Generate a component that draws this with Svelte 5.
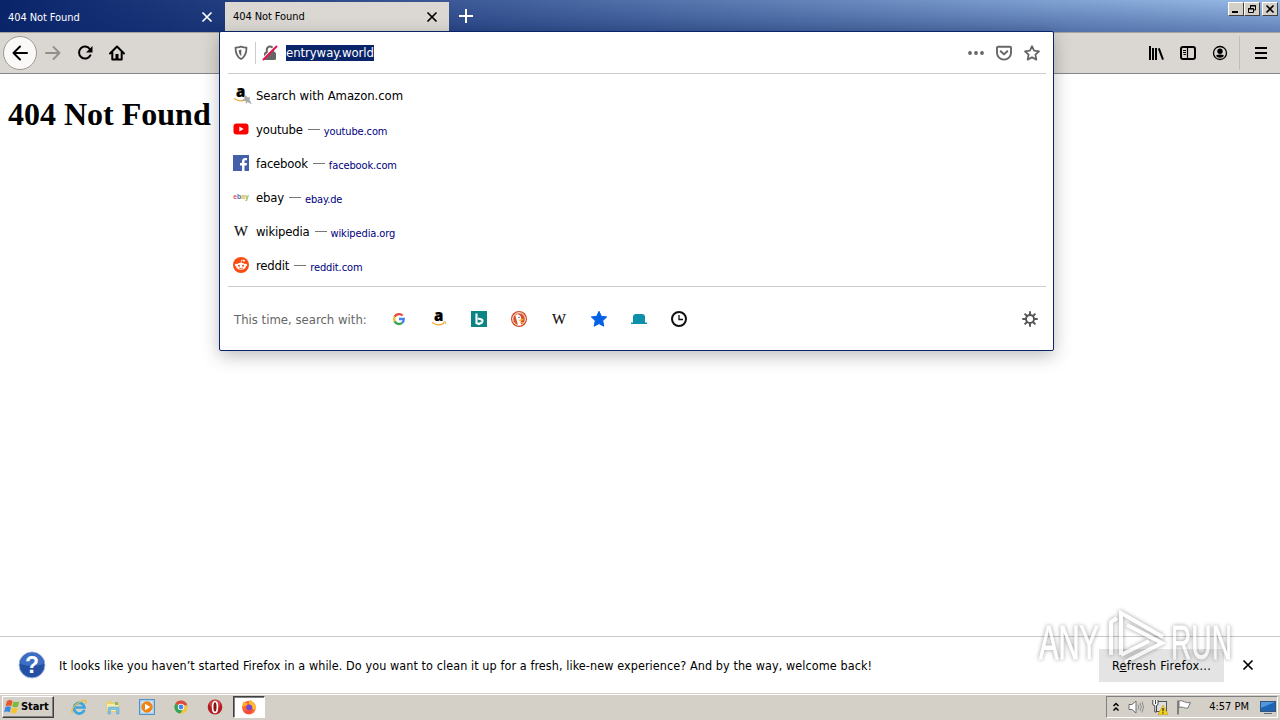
<script lang="ts">
  interface Suggestion {
    icon: string
    title: string
    url: string
  }

  const tabs = [
    { title: '404 Not Found', active: false },
    { title: '404 Not Found', active: true },
  ]

  const suggestions: Suggestion[] = [
    { icon: 'youtube', title: 'youtube', url: 'youtube.com' },
    { icon: 'facebook', title: 'facebook', url: 'facebook.com' },
    { icon: 'ebay', title: 'ebay', url: 'ebay.de' },
    { icon: 'wikipedia', title: 'wikipedia', url: 'wikipedia.org' },
    { icon: 'reddit', title: 'reddit', url: 'reddit.com' },
  ]

  const engines = ['google', 'amazon', 'bing', 'duck', 'wikipedia', 'bookmark', 'hat', 'history']
  const pinned = ['ie', 'explorer', 'player', 'chrome', 'opera']
</script>

{#snippet icon(name: string)}
  <svg class="icon" viewBox="0 0 16 16" width="16" height="16">
    {#if name === 'close'}
      <path d="M3.500 3.500l9 9M12.500 3.500l-9 9" fill="none" stroke="currentColor" stroke-width="1.700" />
    {:else if name === 'plus'}
      <path d="M8 1v14M1 8h14" fill="none" stroke="currentColor" stroke-width="2" />
    {:else if name === 'back'}
      <path d="M15 8H1.500M8 1.500L1.500 8 8 14.500" fill="none" stroke="currentColor" stroke-width="2" stroke-linecap="round" stroke-linejoin="round" />
    {:else if name === 'forward'}
      <path d="M1 8h13.500M8.500 2l6 6-6 6" fill="none" stroke="currentColor" stroke-width="1.800" stroke-linecap="round" stroke-linejoin="round" />
    {:else if name === 'reload'}
      <path d="M13.400 10.300A6 6 0 1 1 13 4.200" fill="none" stroke="currentColor" stroke-width="2" stroke-linecap="round" />
      <path d="M15.500 1v6.500H9z" fill="currentColor" />
    {:else if name === 'home'}
      <path d="M1 8.500L8 1.500l7 7M3.300 7.500V14.500h9.400V7.500" fill="none" stroke="currentColor" stroke-width="2" stroke-linecap="round" stroke-linejoin="round" />
      <path d="M6.500 14.500V9h3v5.500" fill="currentColor" />
    {:else if name === 'shield'}
      <path d="M8 1.700c2 .6 3.700.9 5.500 1 0 5.200-1 8.900-5.500 11.300-4.500-2.400-5.500-6.100-5.500-11.300 1.800-.1 3.500-.4 5.500-1z" fill="none" stroke="currentColor" stroke-width="1.800" stroke-linejoin="round" />
      <path d="M8.300 4.500v6.500c-1.800-1.300-2.500-3.200-2.600-5.800z" fill="currentColor" />
    {:else if name === 'insecure'}
      <rect x="2" y="7" width="12" height="8" rx="1.500" fill="currentColor" />
      <path d="M4.800 7V4.600a3.200 3.200 0 0 1 6.400 0V7" fill="none" stroke="currentColor" stroke-width="2" />
      <path d="M1.500 13.300L13.500 1.300" stroke="#fff" stroke-width="2.200" />
      <path d="M1.500 14.500L14.500 1.500" stroke="#e3154f" stroke-width="2" stroke-linecap="round" />
    {:else if name === 'dots'}
      <g fill="currentColor"><circle cx="2" cy="8" r="1.900" /><circle cx="8" cy="8" r="1.900" /><circle cx="14" cy="8" r="1.900" /></g>
    {:else if name === 'pocket'}
      <path d="M2 1.800h12q1 0 1 1v5a7 6.800 0 0 1-14 0v-5q0-1 1-1z" fill="none" stroke="currentColor" stroke-width="1.900" />
      <path d="M4.700 6.200L8 9.400l3.300-3.200" fill="none" stroke="currentColor" stroke-width="2" stroke-linecap="round" stroke-linejoin="round" />
    {:else if name === 'star'}
      <path d="M8 1.200l2.100 4.500 4.900.6-3.600 3.400.9 4.900L8 12.200l-4.300 2.400.9-4.900L1 6.300l4.900-.6z" fill="none" stroke="currentColor" stroke-width="1.800" stroke-linejoin="round" />
    {:else if name === 'library'}
      <path d="M2 1v14M5 3v12M8 3v12M10.800 3.300L15 14.600" fill="none" stroke="currentColor" stroke-width="2" />
    {:else if name === 'sidebar'}
      <rect x="1" y="2" width="14" height="12" rx="2" fill="none" stroke="currentColor" stroke-width="2" />
      <path d="M7.500 2v12" stroke="currentColor" stroke-width="1.200" />
      <path d="M3 5.500h3M3 7.500h3M3.500 9.500H6" stroke="currentColor" />
    {:else if name === 'account'}
      <circle cx="8" cy="8" r="6.500" fill="none" stroke="currentColor" stroke-width="1.300" />
      <circle cx="8" cy="6.200" r="2.700" fill="currentColor" />
      <path d="M3.900 10.800Q5 9.500 8 9.500t4.100 1.300Q11 12.800 8 12.800t-4.100-2z" fill="currentColor" />
    {:else if name === 'menu'}
      <path d="M2 3h12M2 8h12M2 13h12" stroke="currentColor" stroke-width="2" />
    {:else if name === 'gear'}
      <circle cx="8" cy="8" r="4" fill="none" stroke="currentColor" stroke-width="1.900" />
      <path d="M8 .3v3.500M8 12.200v3.500M.3 8h3.500M12.200 8h3.500M2.600 2.600L5 5M11 11l2.400 2.400M2.600 13.400L5 11M11 5l2.400-2.400" stroke="currentColor" stroke-width="1.900" />
    {:else if name === 'amazon'}
      <text x="3" y="10" font-family="Open Sans" font-size="15" font-weight="800" stroke="#000" stroke-width=".2">a</text>
      <path d="M1 11.500q6.500 4.300 12 .8" fill="none" stroke="#f2a72c" stroke-width="1.300" />
      <path d="M12 11l2.500-.1-.5 2.300" fill="none" stroke="#f2a72c" />
    {:else if name === 'youtube'}
      <rect x=".5" y="2.500" width="15" height="11" rx="3" fill="#f00" />
      <path d="M6.300 5.500v5l4.400-2.500z" fill="#fff" />
    {:else if name === 'facebook'}
      <rect width="16" height="16" fill="#4460a8" />
      <path d="M9 16v-5.500H7V8h2V6.300C9 4.200 10.200 3 12.300 3H14v2.300h-1.300c-1 0-1.200.5-1.200 1.200V8H14l-.4 2.500h-2.100V16z" fill="#fff" />
    {:else if name === 'ebay'}
      <text x=".2" y="9.900" font-family="Liberation Sans" font-size="8" font-weight="bold" textLength="15.500" lengthAdjust="spacingAndGlyphs"><tspan fill="#d8575b">e</tspan><tspan fill="#4a6dc2">b</tspan><tspan fill="#e3b43f">a</tspan><tspan fill="#8cb83d">y</tspan></text>
    {:else if name === 'wikipedia'}
      <text x="1" y="12.700" font-family="Liberation Serif" font-size="15" textLength="14" lengthAdjust="spacingAndGlyphs" fill="#111" stroke="#111" stroke-width=".15">W</text>
    {:else if name === 'reddit'}
      <circle cx="8" cy="8" r="8" fill="#fa4b12" />
      <ellipse cx="8" cy="9.300" rx="4.900" ry="3.500" fill="#fff" />
      <circle cx="3.200" cy="8" r="1.300" fill="#fff" /><circle cx="12.800" cy="8" r="1.300" fill="#fff" />
      <circle cx="11" cy="3.700" r="1" fill="#fff" />
      <path d="M8 6l.7-3 2.300.7" fill="none" stroke="#fff" stroke-width=".7" />
      <circle cx="6" cy="8.700" r="1" fill="#fa4b12" /><circle cx="10" cy="8.700" r="1" fill="#fa4b12" />
      <path d="M6 11q2 1.200 4 0" fill="none" stroke="#fa4b12" stroke-width=".8" />
    {:else if name === 'google'}
      <g fill="none" stroke-width="2.300">
        <path d="M11.600 4.500A5 5 0 0 0 3.600 5.800" stroke="#e24a3b" />
        <path d="M3.600 5.800a5 5 0 0 0 0 4.600" stroke="#f4b92b" />
        <path d="M3.600 10.400a5 5 0 0 0 7.500 1.500" stroke="#35a556" />
        <path d="M11.100 11.900A5 5 0 0 0 12.800 8H8" stroke="#4382ee" />
      </g>
    {:else if name === 'bing'}
      <rect width="16" height="16" fill="#0c8484" />
      <path d="M5.500 2.500v9.500l2.500 1 3-1.500q1.200-2-.5-3L7 7.500" fill="none" stroke="#fff" stroke-width="2.100" />
    {:else if name === 'duck'}
      <circle cx="8" cy="8" r="8" fill="#cf4a24" />
      <circle cx="8" cy="8" r="6.300" fill="#d95127" stroke="#fff" stroke-width="1" />
      <path d="M4.300 4.500Q7 2 9.500 5q1.500 2 .2 5l.3 4H7z" fill="#fff" />
      <path d="M8 8.700q2-1.300 5-.5-2 2-5 1.800z" fill="#f9b92c" />
      <circle cx="8" cy="6.400" r=".7" fill="#253c61" />
      <path d="M9 11.500l3-.8v2.500z" fill="#e9a83a" />
    {:else if name === 'bookmark'}
      <path d="M8 .3l2.300 5 5.400.6-4 3.800 1.100 5.500L8 12.600l-4.800 2.600 1.100-5.500-4-3.800 5.400-.6z" fill="#0560e8" stroke="#0560e8" stroke-linejoin="round" />
    {:else if name === 'hat'}
      <path d="M2 11.500V5.500Q2.200 3 4.500 3h7q2.300 0 2.500 2.500v6h2V13H0v-1.500z" fill="#0d91aa" />
    {:else if name === 'history'}
      <circle cx="8" cy="8" r="7" fill="none" stroke="#111" stroke-width="2" />
      <path d="M8 4v4.500h4" fill="none" stroke="#111" stroke-width="1.300" />
    {:else if name === 'ie'}
      <path d="M13.300 10.800A5.300 5.300 0 1 1 13.500 8.500H4" fill="none" stroke="#3aa5df" stroke-width="2.700" />
      <path d="M1.500 14.300Q-1 11.500 5 5.800 12 0 14.800 1.300q1 1-.8 3.500" fill="none" stroke="#e9bd3d" stroke-width="1.200" />
    {:else if name === 'explorer'}
      <path d="M1 3q0-1 1-1h4l1 1.500h7V13H1z" fill="#e9cf75" />
      <path d="M2 5h11v7H2z" fill="#f8edae" />
      <path d="M3 15V9.500q0-1.500 1.500-1.500h8Q14 8 14 9.500V15h-2.500v-4.500h-6V15z" fill="#7fc3e8" stroke="#55a3cd" stroke-width=".5" />
      <path d="M10 3h3v3h-3z" fill="#83bd58" />
    {:else if name === 'player'}
      <rect x=".5" y=".5" width="15" height="15" fill="#a6d0f0" stroke="#5790c4" />
      <rect x="2.500" y="2.500" width="11" height="11" fill="#dceefb" />
      <circle cx="8" cy="8" r="5.700" fill="#f08414" />
      <path d="M6 4.700v6.600L11.300 8z" fill="#fff" />
    {:else if name === 'chrome'}
      <circle cx="8" cy="8" r="6.600" fill="#f3c63a" />
      <path d="M8 8L2.300 4.700a6.600 6.600 0 0 1 12 1.500H8z" fill="#dc4b3e" />
      <path d="M8 8L2.300 4.700a6.600 6.600 0 0 0 5 9.900l3-4.600z" fill="#35a35a" />
      <circle cx="8" cy="8" r="3.200" fill="#fff" /><circle cx="8" cy="8" r="2.400" fill="#4687e4" />
    {:else if name === 'opera'}
      <ellipse cx="8" cy="8" rx="7.300" ry="7.600" fill="#b51d20" />
      <ellipse cx="8" cy="5" rx="5.500" ry="4" fill="#cb4743" />
      <ellipse cx="8" cy="8" rx="2.400" ry="5.500" fill="#8d1114" stroke="#fff" stroke-width="1.700" />
    {:else if name === 'firefox'}
      <circle cx="8" cy="8.600" r="6.900" fill="#ff6a2b" />
      <path d="M8 5Q7 2.800 10 .500q.5 2 3 3.700 2.300 2 1.900 5.300Q12 12.500 11 8z" fill="#ffbe32" />
      <path d="M1.300 7.500Q1 4 3 2q0 1.500 1 2 2 .1 3 1L4.500 7z" fill="#ffb02e" />
      <circle cx="8.200" cy="8.500" r="3" fill="#7548cf" />
      <path d="M2 10.500q5 3 9.500 0Q10.500 15 7 15 3.500 14.500 2 10.500z" fill="#f9483f" />
    {:else if name === 'sound'}
      <path d="M1 5.500h3L8 2v12l-4-3.500H1z" fill="#fff" stroke="#6e6e6e" />
      <path d="M10 5.500q1.500 2.500 0 5M12 4q2.500 4 0 8M14 2.500q3 5.500 0 11" fill="none" stroke="#848484" stroke-width=".9" />
    {:else if name === 'network'}
      <rect x="4.500" y="2.500" width="10" height="10" fill="#dedede" stroke="#555" />
      <path d="M.8 1v4q0 1.500 2 1.500V13h1.700V6.500Q6 6.300 6 5V1M3.500 1v4" fill="#fff" stroke="#444" />
      <path d="M11 6l5 9.500H6z" fill="#f6d21d" stroke="#c89b10" stroke-width=".6" />
      <path d="M11 9v3.300M11 13.300v1.200" stroke="#222" stroke-width="1.200" />
    {:else if name === 'flag'}
      <path d="M2 1.500v14" stroke="#666" stroke-width="1.500" />
      <path d="M3 2q3-1 5.500.8 3 1.500 6 .7-1.500 3-2.500 5.500-3 .5-4.500-.5-2.500-1-4.500 0z" fill="#fff" stroke="#777" />
    {:else if name === 'desktop'}
      <rect x=".5" y="2.500" width="15" height="10" fill="#1e64b4" stroke="#3a5479" />
      <path d="M1 3h14L1 9z" fill="#4d98df" />
      <path d="M4 14.500h8" stroke="#5a6d85" />
    {/if}
  </svg>
{/snippet}

<div class="screen">
  <header class="titlebar">
    {#each tabs as tab}
      <div class="tab" class:active={tab.active}>
        <span>{tab.title}</span>
        {@render icon('close')}
      </div>
    {/each}
    <button class="new-tab" aria-label="New tab">{@render icon('plus')}</button>
    <div class="window-controls">
      <span class="control"><svg viewBox="0 0 12 10"><path d="M2 8h6" stroke="#000" stroke-width="2" /></svg></span>
      <span class="control"><svg viewBox="0 0 12 10"><path d="M4.500 4V1.500h5V6H8M4 2h6" fill="none" stroke="#000" /><path d="M2.500 4.500h5v4h-5zM2 5h6" fill="none" stroke="#000" /></svg></span>
      <span class="control last"><svg viewBox="0 0 12 10"><path d="M2.500 1.500l7 7M9.500 1.500l-7 7" stroke="#000" stroke-width="1.600" /></svg></span>
    </div>
  </header>

  <nav class="toolbar">
    <span class="back">{@render icon('back')}</span>
    <span class="disabled">{@render icon('forward')}</span>
    {@render icon('reload')}
    {@render icon('home')}
    <div class="tools">
      {@render icon('library')}
      {@render icon('sidebar')}
      {@render icon('account')}
      <span class="menu">{@render icon('menu')}</span>
    </div>
  </nav>

  <main>
    <h1>404 Not Found</h1>
  </main>

  <section class="urlbar">
    <div class="input-row">
      {@render icon('shield')}
      <span class="identity">{@render icon('insecure')}</span>
      <span class="address">entryway.world</span>
      <span class="page-actions">
        {@render icon('dots')}
        {@render icon('pocket')}
        {@render icon('star')}
      </span>
    </div>
    <div class="results">
      <div class="row">
        <span class="pinned-icon">
          {@render icon('amazon')}
          <svg class="pin" viewBox="0 0 10 10"><path d="M4 .5l1.500 2L8 2 7.500 4.500 10 9.500 5.500 7 4 9 3.500 6 0 5.500l2.500-2L2 1z" fill="#aaa" /></svg>
        </span>
        <span class="title wide">Search with Amazon.com</span>
      </div>
      {#each suggestions as item}
        <div class="row">
          {@render icon(item.icon)}
          <span class="title">{item.title}</span>
          <span class="dash"></span>
          <span class="url">{item.url}</span>
        </div>
      {/each}
    </div>
    <footer class="one-offs">
      <span class="label">This time, search with:</span>
      {#each engines as engine}
        {@render icon(engine)}
      {/each}
      <span class="settings">{@render icon('gear')}</span>
    </footer>
  </section>

  <aside class="notification">
    <svg class="help" viewBox="0 0 28 28">
      <circle cx="14" cy="14" r="13" fill="#2450a4" stroke="#a5b8dc" />
      <path d="M2.500 13a11.500 11.500 0 0 1 23 0q-11 4-23 0z" fill="#3c6fc3" />
      <text x="14" y="22" text-anchor="middle" font-family="Liberation Sans" font-size="23" font-weight="700" fill="#fff">?</text>
    </svg>
    <p>It looks like you haven’t started Firefox in a while. Do you want to clean it up for a fresh, like-new experience? And by the way, welcome back!</p>
    <button class="refresh"><span>R<u>e</u>fresh Firefox...</span></button>
    {@render icon('close')}
  </aside>

  <footer class="taskbar">
    <button class="start">
      <svg viewBox="0 0 16 16">
        <path d="M3 2q3-1.800 5.500 0L7.300 7.200Q4.500 5.600 1.500 7.300z" fill="#e8572c" />
        <path d="M9.300 2.400q3 1.400 6-.2l-1.300 5.300q-3 1.500-5.700-.1z" fill="#7cba3d" />
        <path d="M1.300 8.200q3-1.700 5.700 0l-1.300 5.200q-3-1.600-5.500.1z" fill="#3c8ade" />
        <path d="M8 8.500q3 1.500 5.700.1L12.500 13.700q-3 1.500-5.800-.1z" fill="#f5c52d" />
      </svg>
      Start
    </button>
    <div class="pinned">
      {#each pinned as app}
        {@render icon(app)}
      {/each}
    </div>
    <span class="task">{@render icon('firefox')}</span>
    <div class="tray">
      <svg class="chevrons" viewBox="0 0 8 10"><path d="M1.500 4L4 1.500 6.500 4M1.500 8.500L4 6l2.500 2.500" fill="none" stroke="#000" stroke-width="1.500" /></svg>
      {@render icon('sound')}
      {@render icon('network')}
      {@render icon('flag')}
      <time>4:57 PM</time>
      {@render icon('desktop')}
    </div>
  </footer>

  <svg class="watermark" viewBox="0 0 200 84">
    <g class="mark">
      <text x="4" y="54" textLength="60" lengthAdjust="spacingAndGlyphs">ANY</text>
      <text x="136" y="54" textLength="61" lengthAdjust="spacingAndGlyphs">RUN</text>
      <path d="M76 50V17l6-4M86 50V8l42 24M92 20l35 18-37 19M86 50l28-14" />
    </g>
  </svg>
</div>

<style>
  :global(body) {
    margin: 0;
  }

  .screen {
    position: relative;
    display: flex;
    flex-direction: column;
    width: 1280px;
    height: 720px;
    overflow: hidden;
    background: #fff;
    color: #000;
    font-family: 'DejaVu Sans Condensed', 'DejaVu Sans', sans-serif;
    font-stretch: condensed;
    font-size: 11px;
  }

  .icon {
    display: block;
    flex: none;
    overflow: visible;
    font-stretch: normal;
    letter-spacing: 0;
  }

  button {
    border: 0;
    padding: 0;
    color: inherit;
    font: inherit;
  }

  .titlebar {
    display: flex;
    box-sizing: border-box;
    height: 32px;
    padding-top: 2px;
    background:
      linear-gradient(rgba(10, 36, 106, 0.05), rgba(10, 36, 106, 0.42)),
      linear-gradient(90deg, #0a246a, #a0c4ee);
  }

  .tab {
    display: flex;
    align-items: center;
    justify-content: space-between;
    box-sizing: border-box;
    width: 225px;
    height: 30px;
    padding: 0 10px 0 8px;
    color: #fff;
    letter-spacing: -0.08px;
  }

  .tab.active {
    width: 224px;
    height: 29px;
    padding-right: 9px;
    background: #dbd7d2;
    color: #000;
  }

  .new-tab {
    align-self: center;
    margin: -3px 0 0 9px;
    background: none;
    color: #fff;
  }

  .window-controls {
    display: flex;
    margin: 0 2px 0 auto;
  }

  .control {
    box-sizing: border-box;
    width: 16px;
    height: 14px;
    border: 1px solid;
    border-color: #fff #404040 #404040 #fff;
    background: #d4d0c8;
  }

  .control svg {
    display: block;
    width: 12px;
    height: 10px;
    margin: 1px;
  }

  .control.last {
    margin-left: 2px;
  }

  .toolbar {
    display: flex;
    align-items: center;
    box-sizing: border-box;
    height: 42px;
    padding-left: 3px;
    gap: 16px;
    border-top: 1px solid #a9a39b;
    border-bottom: 1px solid #88868a;
    background: #dad6d1;
  }

  .back {
    display: grid;
    place-items: center;
    box-sizing: border-box;
    width: 34px;
    height: 34px;
    margin-right: -8px;
    border: 1px solid #9d9994;
    border-radius: 50%;
    background: #faf9f8;
  }

  .disabled {
    color: #928f8b;
  }

  .tools {
    display: flex;
    align-items: center;
    gap: 16px;
    margin-left: auto;
  }

  .menu {
    display: flex;
    align-items: center;
    height: 34px;
    margin-left: -5px;
    padding: 0 11px 0 13px;
    border-left: 1px solid #c2bdb6;
  }

  main {
    flex: 1;
  }

  h1 {
    margin: 21px 8px;
    font: bold 32px/38px 'Liberation Serif', serif;
  }

  /* Opened address bar, lies over the toolbar and the page */
  .urlbar {
    position: absolute;
    top: 31px;
    left: 219px;
    box-sizing: border-box;
    width: 835px;
    height: 320px;
    padding: 0 7px 0 8px;
    border: 1px solid #0a246a;
    border-radius: 2px;
    background: #fff;
    box-shadow: 0 5px 18px rgba(0, 0, 0, 0.26);
    font-size: 13px;
  }

  .input-row {
    display: flex;
    align-items: center;
    height: 41px;
    padding: 0 6px 0 5px;
    border-bottom: 1px solid #ccc;
    color: #666;
  }

  .identity {
    margin: 0 8px 0 6px;
    padding: 3px 0 3px 6px;
    border-left: 1px solid #ccc;
  }

  .address {
    height: 16px;
    margin-top: 1px;
    background: #0a246a;
    color: #fff;
    line-height: 16px;
    letter-spacing: -0.06px;
  }

  .page-actions {
    display: flex;
    gap: 12px;
    margin-left: auto;
  }

  .results {
    padding: 4px 5px;
    border-bottom: 1px solid #ccc;
  }

  .row {
    display: flex;
    align-items: center;
    height: 34px;
  }

  .title {
    margin-left: 7px;
    letter-spacing: -0.2px;
  }

  .title.wide {
    letter-spacing: -0.06px;
  }

  .pinned-icon {
    position: relative;
  }

  .pin {
    position: absolute;
    right: -3px;
    bottom: -2px;
    width: 10px;
    height: 10px;
  }

  .dash {
    width: 12px;
    height: 1px;
    margin: 0 4px 0 5px;
    background: #777;
  }

  .url {
    padding-top: 4px;
    color: #000080;
    font-size: 11px;
    letter-spacing: -0.12px;
  }

  .one-offs {
    display: flex;
    align-items: center;
    height: 64px;
    gap: 24px;
    padding: 0 8px 0 6px;
  }

  .label {
    width: 133px;
    color: #666;
    white-space: nowrap;
  }

  .settings {
    margin-left: auto;
    color: #555;
  }

  .notification {
    display: flex;
    align-items: center;
    box-sizing: border-box;
    height: 57px;
    padding: 0 24px 0 18px;
    border-top: 1px solid #c8c8c8;
    font-size: 12.5px;
  }

  .help {
    width: 28px;
    height: 28px;
  }

  .notification p {
    flex: 1;
    margin: 1px 0 0 13px;
    letter-spacing: 0.08px;
    white-space: nowrap;
  }

  .refresh {
    width: 125px;
    height: 33px;
    margin-right: 16px;
    background: #e4e4e4;
    letter-spacing: 0.3px;
    white-space: nowrap;
  }

  /* keeps the label readable above the watermark */
  .refresh span {
    position: relative;
    z-index: 1;
  }

  .taskbar {
    display: flex;
    align-items: center;
    box-sizing: border-box;
    height: 27px;
    padding: 0 2px 1px;
    border-top: 1px solid #d4d0c8;
    background: #d4d0c8;
    box-shadow: inset 0 1px #fff;
  }

  .start {
    display: flex;
    align-items: center;
    box-sizing: border-box;
    width: 52px;
    height: 22px;
    padding-left: 1px;
    gap: 1px;
    border: 1px solid;
    border-color: #fff #404040 #404040 #fff;
    background: #d4d0c8;
    box-shadow: inset -1px -1px #808080;
    font-weight: bold;
    letter-spacing: -0.1px;
  }

  .start svg {
    flex: none;
    width: 16px;
    height: 16px;
  }

  .pinned {
    display: flex;
    gap: 18px;
    margin: 0 10px 0 17px;
  }

  .task {
    display: grid;
    place-items: center;
    box-sizing: border-box;
    width: 32px;
    height: 22px;
    border: 1px solid;
    border-color: #404040 #fff #fff #404040;
    background: #fff;
    box-shadow: inset 1px 1px #808080;
  }

  .tray {
    display: flex;
    align-items: center;
    box-sizing: border-box;
    width: 172px;
    height: 22px;
    margin-left: auto;
    padding: 0 1px 0 5px;
    border: 1px solid;
    border-color: #808080 #fff #fff #808080;
    gap: 8px;
  }

  .chevrons {
    width: 8px;
    height: 10px;
  }

  time {
    margin: 0 3px 0 auto;
    white-space: nowrap;
  }

  .watermark {
    position: absolute;
    top: 605px;
    left: 1035px;
    width: 200px;
    height: 84px;
    overflow: visible;
    pointer-events: none;
  }

  .mark {
    filter: drop-shadow(0 0 2px rgba(0, 0, 0, 0.6));
    fill: #fff;
    font: 48px 'Liberation Sans', sans-serif;
    opacity: 0.65;
    stroke: #fff;
    stroke-width: 0.8;
  }

  .mark path {
    fill: none;
    stroke-width: 4;
  }
</style>
